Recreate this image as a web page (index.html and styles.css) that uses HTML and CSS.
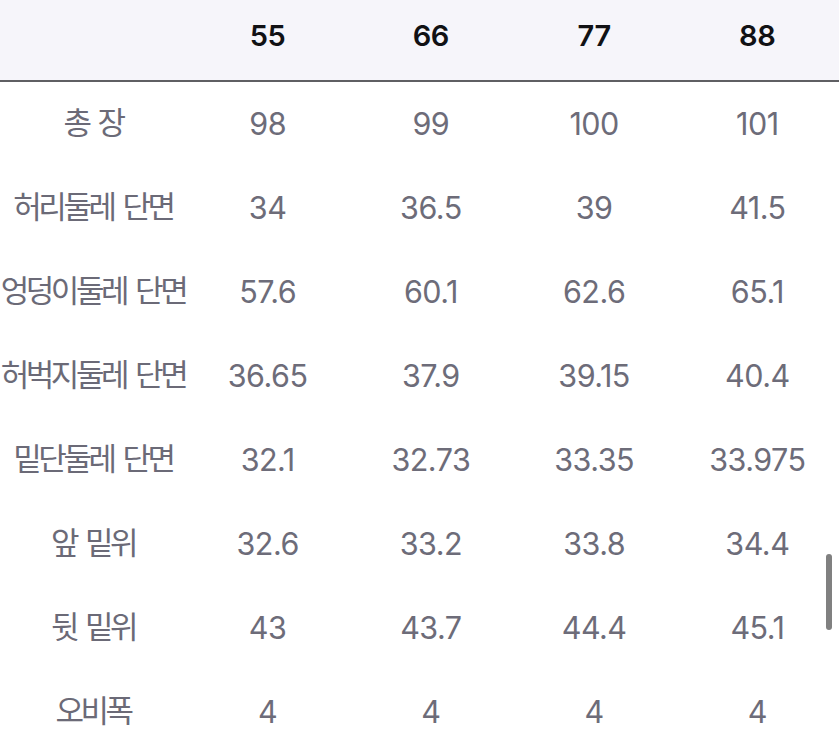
FILE: index.html
```html
<!DOCTYPE html>
<html lang="ko">
<head>
<meta charset="utf-8">
<link rel="stylesheet" href="styles.css">
</head>
<body>
<div class="sheet">
  <div class="row head">
    <div class="cell label"></div>
    <div class="cell">55</div>
    <div class="cell">66</div>
    <div class="cell">77</div>
    <div class="cell">88</div>
  </div>
  <div class="row"><div class="cell label">총 장</div><div class="cell">98</div><div class="cell">99</div><div class="cell">100</div><div class="cell">101</div></div>
  <div class="row"><div class="cell label">허리둘레 단면</div><div class="cell">34</div><div class="cell">36.5</div><div class="cell">39</div><div class="cell">41.5</div></div>
  <div class="row"><div class="cell label">엉덩이둘레 단면</div><div class="cell">57.6</div><div class="cell">60.1</div><div class="cell">62.6</div><div class="cell">65.1</div></div>
  <div class="row"><div class="cell label">허벅지둘레 단면</div><div class="cell">36.65</div><div class="cell">37.9</div><div class="cell">39.15</div><div class="cell">40.4</div></div>
  <div class="row"><div class="cell label">밑단둘레 단면</div><div class="cell">32.1</div><div class="cell">32.73</div><div class="cell">33.35</div><div class="cell">33.975</div></div>
  <div class="row"><div class="cell label">앞 밑위</div><div class="cell">32.6</div><div class="cell">33.2</div><div class="cell">33.8</div><div class="cell">34.4</div></div>
  <div class="row"><div class="cell label">뒷 밑위</div><div class="cell">43</div><div class="cell">43.7</div><div class="cell">44.4</div><div class="cell">45.1</div></div>
  <div class="row"><div class="cell label">오비폭</div><div class="cell">4</div><div class="cell">4</div><div class="cell">4</div><div class="cell">4</div></div>
  <div class="scrollbar"></div>
</div>
</body>
</html>
```

FILE: styles.css
```css
html, body {
  margin: 0;
  padding: 0;
  overflow: hidden;
  background: #ffffff;
}

.sheet {
  position: relative;
  width: 839px;
  height: 750px;
  overflow: hidden;
  font-family: Inter, "Noto Sans CJK KR", sans-serif;
}

.row {
  display: grid;
  grid-template-columns: 186px repeat(4, 1fr);
  height: 84px;
  align-items: center;
  color: #6d6c79;
  font-size: 30.5px;
  letter-spacing: -0.5px;
}

.cell {
  text-align: center;
  white-space: nowrap;
  padding-bottom: 2px;
}

.label {
  padding-bottom: 7px;
  font-family: "Noto Sans CJK KR", sans-serif;
  font-size: 31px;
  letter-spacing: -3.5px;
  word-spacing: 4px;
  color: #6b6a77;
}

.head {
  box-sizing: border-box;
  height: 82px;
  padding-bottom: 10px;
  background: #f6f5fa;
  border-bottom: 2px solid #5f5f63;
  color: #111114;
  font-weight: 600;
  font-size: 29px;
  letter-spacing: -0.3px;
}

.head .cell {
  padding-bottom: 0;
}

.scrollbar {
  position: absolute;
  left: 826px;
  top: 554px;
  width: 6px;
  height: 76px;
  border-radius: 3px;
  background: #808080;
}
```
